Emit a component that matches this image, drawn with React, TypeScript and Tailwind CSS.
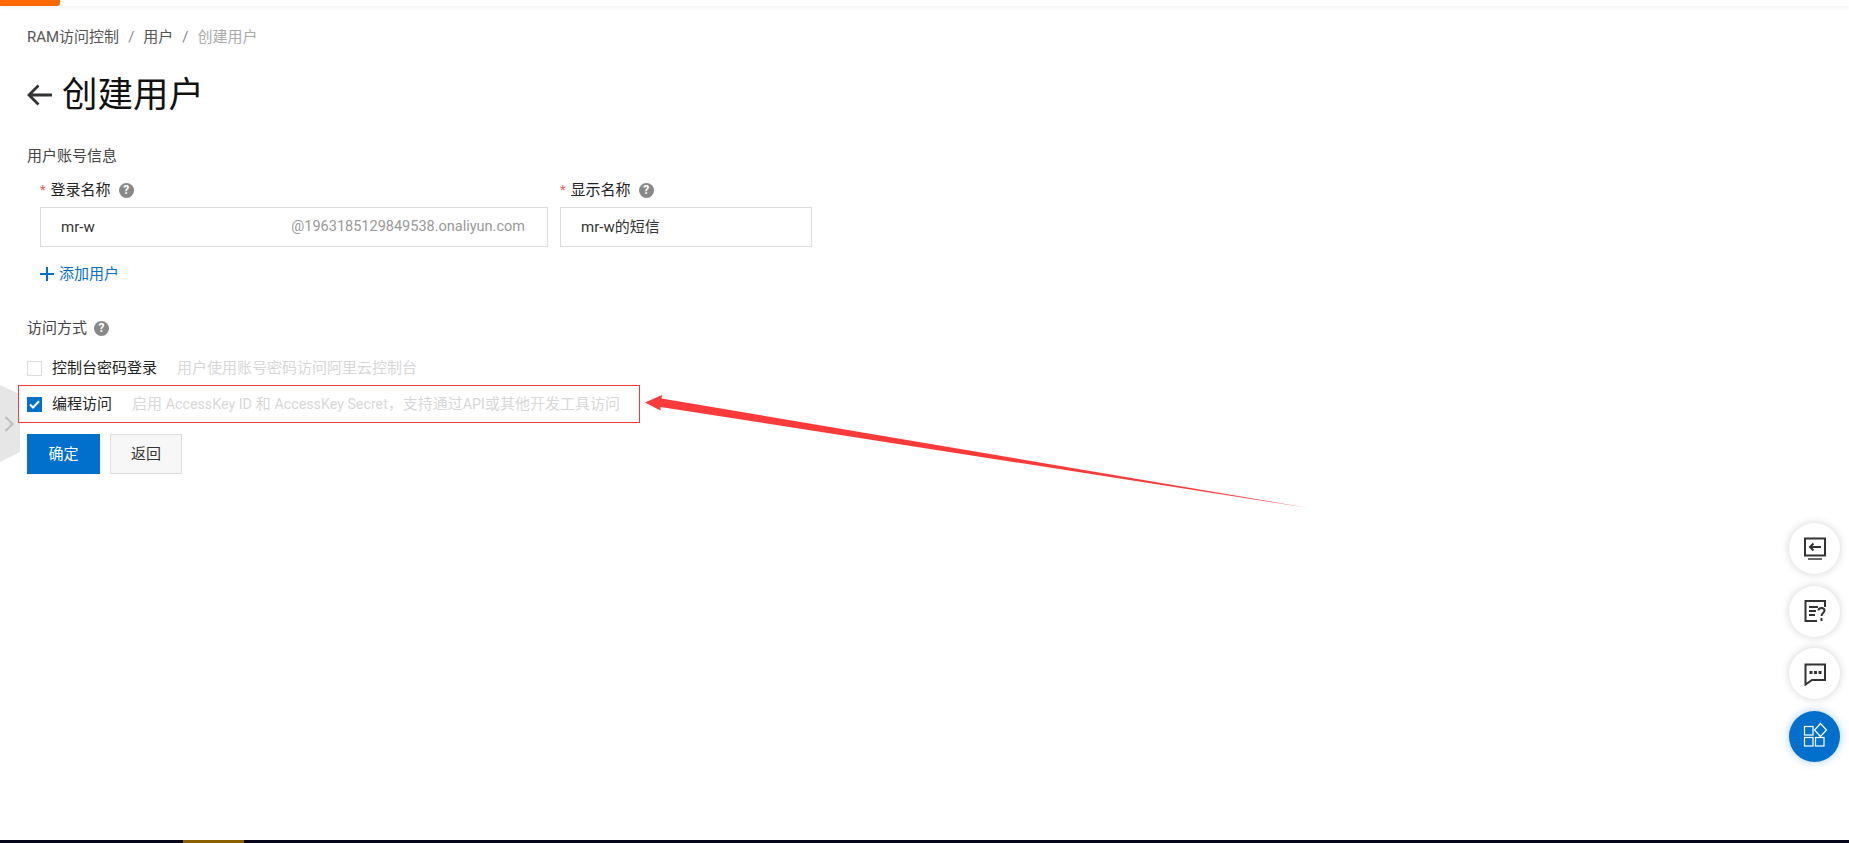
const font = "font-['Roboto','Noto_Sans_CJK_SC','Noto_Sans',sans-serif]";

function Help() {
  return (
    <span className="flex h-[15px] w-[15px] items-center justify-center rounded-full bg-[#888888] text-[12px] font-bold leading-none text-white">?</span>
  );
}

function Star() {
  return <span className="text-[13px] text-[#e8595c]">*</span>;
}

function Check() {
  return (
    <span className="flex h-[15px] w-[15px] items-center justify-center bg-[#0070cc]">
      <svg width="11" height="9" viewBox="0 0 11 9" fill="none">
        <path d="M1 4.5 L4 7.5 L10 1.2" stroke="#fff" strokeWidth="2" />
      </svg>
    </span>
  );
}

function Round({ children, blue }: { children: React.ReactNode; blue?: boolean }) {
  return (
    <div className={`flex h-[51px] w-[51px] items-center justify-center rounded-full ${blue ? "bg-[#0070cc] shadow-[0_0_8px_rgba(0,112,204,0.35)]" : "bg-white shadow-[0_0_8px_rgba(0,0,0,0.18)]"}`}>
      {children}
    </div>
  );
}

export default function App() {
  return (
    <div className={`relative flex h-[843px] w-full flex-col overflow-hidden bg-white text-[15px] leading-[20px] text-[#333333] ${font}`}>
      <div className="h-[6px] w-full shrink-0 bg-white shadow-[0_1px_4px_rgba(0,0,0,0.07)]">
        <div className="h-[6px] w-[60px] rounded-br-[3px] bg-[#ff6a00]" />
      </div>

      <div className="flex flex-1 flex-col pl-[27px]">
        <nav className="mt-[21px] flex h-[20px] items-center text-[#555555]">
          <span>RAM访问控制</span>
          <span className="mx-[9px] text-[#888888]">/</span>
          <span>用户</span>
          <span className="mx-[9px] text-[#888888]">/</span>
          <span className="text-[#aaaaaa]">创建用户</span>
        </nav>

        <div className="mt-[24px] flex h-[48px] items-center">
          <svg width="25" height="22" viewBox="0 0 25 22" fill="none" className="mr-[10px]">
            <path d="M25 11 H2 M11.5 1.5 L2 11 L11.5 20.5" stroke="#333" strokeWidth="2.8" />
          </svg>
          <h1 className="text-[35.5px] font-normal leading-[48px] text-[#111111]">创建用户</h1>
        </div>

        <div className="mt-[27px] h-[20px] text-[#444444]">用户账号信息</div>

        <div className="ml-[13px] mt-[14px] flex gap-[12px]">
          <div className="flex w-[508px] flex-col">
            <div className="flex h-[20px] items-center text-[#222222]">
              <Star />
              <span className="ml-[5px]">登录名称</span>
              <span className="ml-[8px]"><Help /></span>
            </div>
            <div className="mt-[7px] flex h-[40px] items-center justify-between border border-[#dcdcdc] pl-[20px] pr-[22px]">
              <span>mr-w</span>
              <span className="text-[14.5px] text-[#999999]">@1963185129849538.onaliyun.com</span>
            </div>
          </div>
          <div className="flex w-[252px] flex-col">
            <div className="flex h-[20px] items-center text-[#222222]">
              <Star />
              <span className="ml-[5px]">显示名称</span>
              <span className="ml-[8px]"><Help /></span>
            </div>
            <div className="mt-[7px] flex h-[40px] items-center border border-[#dcdcdc] pl-[20px]">
              <span>mr-w的短信</span>
            </div>
          </div>
        </div>

        <div className="ml-[13px] mt-[17px] flex h-[20px] items-center text-[#0070cc]">
          <svg width="14" height="14" viewBox="0 0 14 14" fill="none" className="mr-[5px]">
            <path d="M7 0 V14 M0 7 H14" stroke="#0070cc" strokeWidth="2" />
          </svg>
          <span>添加用户</span>
        </div>

        <div className="mt-[34px] flex h-[20px] items-center text-[#444444]">
          <span>访问方式</span>
          <span className="ml-[7px]"><Help /></span>
        </div>

        <div className="mt-[20px] flex h-[20px] items-center">
          <span className="h-[15px] w-[15px] border border-[#dcdcdc]" />
          <span className="ml-[10px] text-[#222222]">控制台密码登录</span>
          <span className="ml-[20px] text-[#d7d7d7]">用户使用账号密码访问阿里云控制台</span>
        </div>

        <div className="relative z-10 -ml-[9px] mt-[7px] flex h-[38px] w-[622px] items-center border border-[#f43a3a] bg-white pl-[8px]">
          <Check />
          <span className="ml-[10px] text-[#222222]">编程访问</span>
          <span className="ml-[20px] text-[#d7d7d7]">
            启用 <span className="text-[14.25px]">AccessKey ID</span> 和 <span className="text-[14.25px]">AccessKey Secret</span>，支持通过<span className="text-[14.25px]">API</span>或其他开发工具访问
          </span>
        </div>

        <div className="mt-[11px] flex gap-[10px]">
          <button className="h-[40px] w-[73px] bg-[#0070cc] text-white">确定</button>
          <button className="h-[40px] w-[72px] border border-[#dcdcdc] bg-[#f7f7f7] text-[#333333]">返回</button>
        </div>
      </div>

      <div className="flex h-[3px] w-full shrink-0 bg-[#06061a]">
        <div className="ml-[183px] h-[3px] w-[61px] bg-[#8a6000]" />
      </div>

      {/* collapsed sidebar tab */}
      <svg width="20" height="78" viewBox="0 0 20 78" className="absolute left-0 top-[385px]">
        <path d="M0 0 L20 9 V67 L0 77 Z" fill="#e6e6e6" />
        <path d="M5.5 32 L12.5 39 L5.5 46" stroke="#bbbbbb" strokeWidth="2" fill="none" />
      </svg>

      {/* annotation arrow */}
      <svg width="680" height="125" viewBox="640 390 680 125" className="absolute left-[640px] top-[390px]">
        <path d="M645 402.5 L662 395 L661.5 398.5 L1309 508 L660.5 407 L660.5 410.5 Z" fill="#fb3a3a" />
      </svg>

      {/* floating buttons */}
      <div className="absolute left-[1789px] top-[523px] flex flex-col gap-[11.5px]">
        <Round>
          <svg width="24" height="24" viewBox="0 0 24 24" fill="none" stroke="#333" strokeWidth="2">
            <rect x="2" y="1.5" width="20" height="17" />
            <path d="M18 10 H7 M10.5 6.5 L7 10 L10.5 13.5" />
            <path d="M5 22 H19" stroke="#666" />
          </svg>
        </Round>
        <Round>
          <svg width="24" height="24" viewBox="0 0 24 24" fill="none" stroke="#333" strokeWidth="2">
            <path d="M22 8 V2 H2.5 V22 H14" />
            <path d="M6 8 H15 M6 12 H13 M6 16 H12" />
            <path d="M15.5 11.5 C15.5 8 21.5 8 21.5 11.5 C21.5 14 18.5 14 18.5 17" />
            <path d="M18.5 19 V22" />
          </svg>
        </Round>
        <Round>
          <svg width="24" height="24" viewBox="0 0 24 24" fill="none" stroke="#333" strokeWidth="2">
            <path d="M2.5 2.5 H22 V18 H9 L2.5 22.5 Z" />
            <path d="M6.5 10.5 H9.5 M11 10.5 H14 M15.5 10.5 H18.5" strokeWidth="3" />
          </svg>
        </Round>
        <Round blue>
          <svg width="24" height="24" viewBox="0 0 24 24" fill="none" stroke="#fff" strokeWidth="1.2" className="overflow-visible">
            <rect x="1.5" y="2.5" width="8.5" height="8.5" />
            <rect x="1.5" y="13.5" width="8.5" height="8.5" />
            <rect x="12.5" y="13.5" width="8.5" height="8.5" />
            <path d="M17.5 -0.5 L23.5 6 L17.5 12.5 L11.5 6 Z" />
          </svg>
        </Round>
      </div>
    </div>
  );
}
